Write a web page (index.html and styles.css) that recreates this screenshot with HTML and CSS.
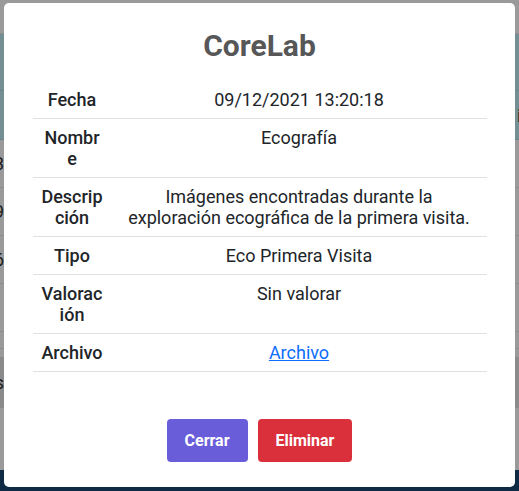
FILE: index.html
```html
<!DOCTYPE html>
<html lang="es">
<head>
<meta charset="utf-8">
<title>CoreLab</title>
<link rel="stylesheet" href="styles.css">
</head>
<body>
<div class="page">
  <div class="band band-top"></div>
  <div class="band band-teal">
    <div class="bg-row h57"></div>
    <div class="bg-row h49 right-peek"><span class="peek-r">i</span></div>
  </div>
  <div class="bg-row h48"><div class="peek"><span>13</span></div></div>
  <div class="bg-row h48"><div class="peek"><span>19</span></div></div>
  <div class="bg-row h48"><div class="peek"><span>16</span></div></div>
  <div class="bg-row h48"></div>
  <div class="bg-row h17"></div>
  <div class="bg-row h8 noline"></div>
  <div class="bg-row band-dark h51 noline"><div class="peek"><span>os</span></div></div>
  <div class="bg-row h62 noline"></div>
  <div class="band band-navy"></div>
</div>

<div class="modal">
  <h2 class="title">CoreLab</h2>
  <table class="details">
    <tbody>
      <tr><th>Fecha</th><td>09/12/2021 13:20:18</td></tr>
      <tr><th>Nombre</th><td>Ecografía</td></tr>
      <tr><th>Descripción</th><td>Imágenes encontradas durante la exploración ecográfica de la primera visita.</td></tr>
      <tr><th>Tipo</th><td>Eco Primera Visita</td></tr>
      <tr><th>Valoración</th><td>Sin valorar</td></tr>
      <tr><th>Archivo</th><td><a href="#" class="link">Archivo</a></td></tr>
    </tbody>
  </table>
  <div class="actions">
    <button class="btn btn-close">Cerrar</button>
    <button class="btn btn-delete">Eliminar</button>
  </div>
</div>
</body>
</html>
```

FILE: styles.css
```css
html, body {
  margin: 0;
  padding: 0;
}
body {
  width: 519px;
  height: 491px;
  overflow: hidden;
  position: relative;
  font-family: Roboto, "Liberation Sans", sans-serif;
  background: #9a9a9a;
}

/* dimmed page behind the dialog */
.page {
  display: flex;
  flex-direction: column;
  height: 491px;
  color: #1d1d1d;
  font-size: 18px;
}
.band-top {
  height: 33px;
  border-bottom: 1px solid #8d8d8d;
}
.band-teal {
  background: #738f94;
  display: flex;
  flex-direction: column;
}
.bg-row {
  border-bottom: 1px solid #8d8d8d;
  display: flex;
  align-items: center;
  justify-content: space-between;
}
.band-teal .bg-row {
  border-bottom-color: #6a858a;
}
.noline { border-bottom: none; }
.h57 { height: 56px; }
.h49 { height: 48px; }
.h48 { height: 47px; }
.h17 { height: 16px; }
.h8 { height: 8px; }
.h51 { height: 51px; }
.h62 { height: 62px; }
.band-dark { background: #8a8a8a; }
.band-navy {
  flex: 1;
  background: #0e2a45;
}
.peek {
  width: 4px;
  overflow: hidden;
  display: flex;
  justify-content: flex-end;
}
.peek span { white-space: nowrap; }
.right-peek { justify-content: flex-end; }
.peek-r {
  width: 4px;
  overflow: hidden;
  text-indent: 2px;
}

/* dialog */
.modal {
  position: absolute;
  left: 4px;
  top: 3px;
  width: 511px;
  height: 484px;
  background: #fff;
  border-radius: 5px;
  display: flex;
  flex-direction: column;
  align-items: center;
}
.title {
  margin: 25px 0 17px;
  font-size: 30px;
  line-height: 36px;
  font-weight: 700;
  color: #575757;
}
.details {
  width: 454px;
  margin-left: 1px;
  border-collapse: collapse;
  table-layout: fixed;
  font-size: 18px;
  line-height: 21px;
  color: #212529;
}
.details th,
.details td {
  padding: 8px;
  border-bottom: 1px solid #dee2e6;
  text-align: center;
  vertical-align: top;
}
.details th {
  width: 62px;
  font-weight: 500;
  overflow-wrap: anywhere;
  word-break: break-all;
}
.link {
  color: #0d6efd;
  text-decoration: underline;
}
.actions {
  margin-top: 47px;
  display: flex;
  gap: 10px;
}
.btn {
  border: none;
  border-radius: 4px;
  color: #fff;
  font-family: Roboto, "Liberation Sans", sans-serif;
  font-size: 16px;
  font-weight: 700;
  line-height: 19px;
  padding: 12px 18px;
}
.btn-close { background: #695dda; }
.btn-delete { background: #d9303c; }
```
